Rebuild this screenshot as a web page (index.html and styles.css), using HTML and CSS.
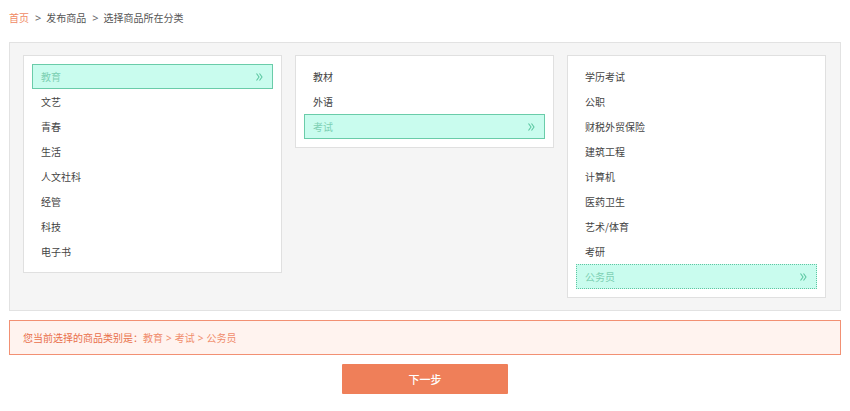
FILE: index.html
```html
<!DOCTYPE html>
<html lang="zh-CN">
<head>
<meta charset="utf-8">
<title>选择商品所在分类</title>
<link rel="stylesheet" href="styles.css">
</head>
<body>
<div class="page">
  <div class="crumbs">
    <a class="crumb-home" href="#">首页</a><span class="sep">&gt;</span><span>发布商品</span><span class="sep">&gt;</span><span>选择商品所在分类</span>
  </div>

  <div class="picker">
    <ul class="col">
      <li class="item active"><span>教育</span><svg class="arr" width="7" height="8" viewBox="0 0 7 8"><polyline points="0.5,0.5 3,4 0.5,7.5" fill="none" stroke="#5cc8a2" stroke-width="1.1"/><polyline points="3.5,0.5 6,4 3.5,7.5" fill="none" stroke="#5cc8a2" stroke-width="1.1"/></svg></li>
      <li class="item">文艺</li>
      <li class="item">青春</li>
      <li class="item">生活</li>
      <li class="item">人文社科</li>
      <li class="item">经管</li>
      <li class="item">科技</li>
      <li class="item">电子书</li>
    </ul>
    <ul class="col">
      <li class="item">教材</li>
      <li class="item">外语</li>
      <li class="item active"><span>考试</span><svg class="arr" width="7" height="8" viewBox="0 0 7 8"><polyline points="0.5,0.5 3,4 0.5,7.5" fill="none" stroke="#5cc8a2" stroke-width="1.1"/><polyline points="3.5,0.5 6,4 3.5,7.5" fill="none" stroke="#5cc8a2" stroke-width="1.1"/></svg></li>
    </ul>
    <ul class="col">
      <li class="item">学历考试</li>
      <li class="item">公职</li>
      <li class="item">财税外贸保险</li>
      <li class="item">建筑工程</li>
      <li class="item">计算机</li>
      <li class="item">医药卫生</li>
      <li class="item">艺术/体育</li>
      <li class="item">考研</li>
      <li class="item active focus"><span>公务员</span><svg class="arr" width="7" height="8" viewBox="0 0 7 8"><polyline points="0.5,0.5 3,4 0.5,7.5" fill="none" stroke="#5cc8a2" stroke-width="1.1"/><polyline points="3.5,0.5 6,4 3.5,7.5" fill="none" stroke="#5cc8a2" stroke-width="1.1"/></svg></li>
    </ul>
  </div>

  <div class="current">
    <span class="label">您当前选择的商品类别是：</span><span class="path">教育<span class="psep">&gt;</span>考试<span class="psep">&gt;</span>公务员</span>
  </div>

  <div class="actions">
    <button class="next" type="button">下一步</button>
  </div>
</div>
</body>
</html>
```

FILE: styles.css
```css
* { box-sizing: border-box; }

html, body {
  margin: 0;
  padding: 0;
  background: #fff;
}

body {
  font-family: "Noto Sans CJK SC", "Noto Sans", "Liberation Sans", sans-serif;
  font-size: 10px;
  color: #444;
}

.page {
  padding: 8px 9px 0 9px;
}

.crumbs {
  height: 20px;
  line-height: 20px;
  color: #555;
  display: flex;
  align-items: center;
}

.crumb-home {
  color: #f08a65;
  text-decoration: none;
}

.sep {
  margin: 0 5px 0 6px;
  color: #666;
  font-family: "Noto Sans", sans-serif;
  font-size: 11px;
}

.picker {
  margin-top: 14px;
  background: #f5f5f5;
  border: 1px solid #e2e2e2;
  padding: 12px 14px 12px 13px;
  display: flex;
  align-items: flex-start;
  gap: 13px;
}

.col {
  flex: 1;
  list-style: none;
  margin: 0;
  background: #fff;
  border: 1px solid #e0e0e0;
  padding: 8px;
}

.item {
  height: 25px;
  line-height: 23px;
  border: 1px solid transparent;
  padding: 0 9px 0 8px;
  color: #444;
  display: flex;
  align-items: center;
  justify-content: space-between;
}

.item.active {
  background: #c9fcee;
  border-color: #6acca9;
  color: #7dd0b3;
}

.item.focus {
  border-style: dotted;
  border-color: #5fc6a2;
}

.arr {
  display: block;
}

.current {
  margin-top: 9px;
  height: 35px;
  line-height: 33px;
  border: 1px solid #f29073;
  background: #fff3ef;
  padding: 0 13px;
  color: #e8734f;
}

.current .label {
  color: #e9704b;
}

.current .path {
  color: #f08c6c;
}

.psep {
  margin: 0 3px;
  font-family: "Noto Sans", sans-serif;
}

.actions {
  margin-top: 9px;
  display: flex;
  justify-content: center;
}

.next {
  width: 166px;
  height: 30px;
  border: none;
  border-radius: 1px;
  background: #ef7f59;
  color: #fff;
  font-family: "Noto Sans CJK SC", "Noto Sans", sans-serif;
  font-size: 11px;
  font-weight: 500;
  cursor: pointer;
}
```
